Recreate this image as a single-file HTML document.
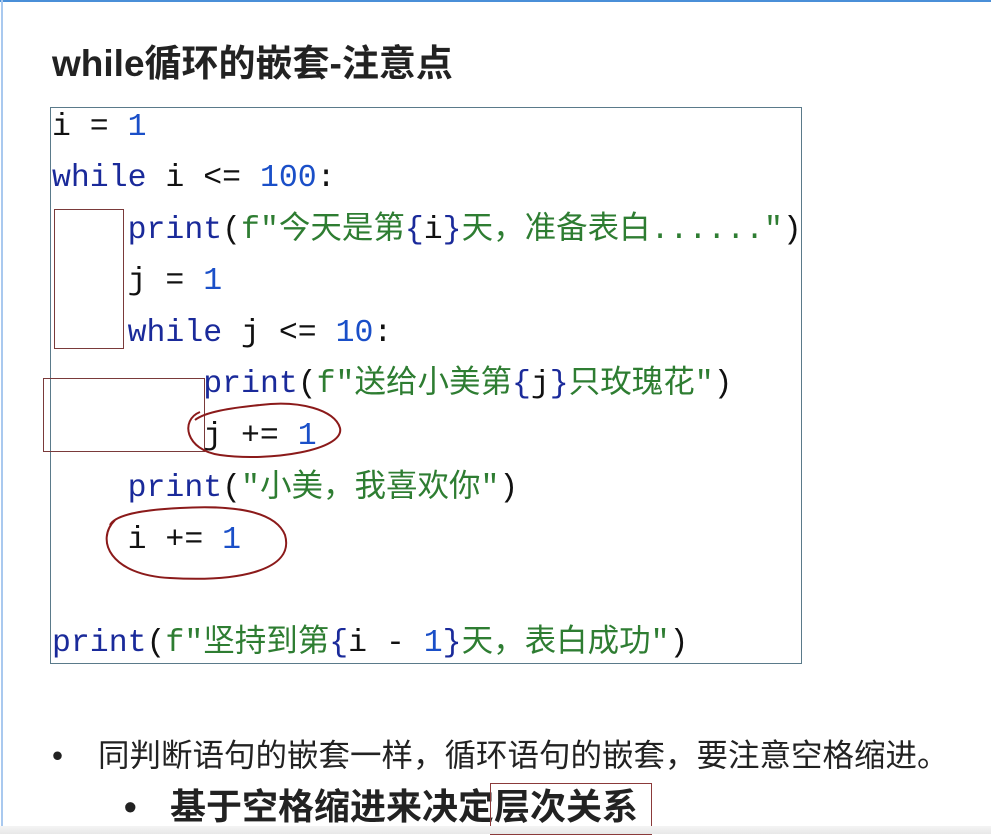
<!DOCTYPE html><html><head><meta charset="utf-8"><style>
body{margin:0;width:991px;height:834px;background:#fff;position:relative;overflow:hidden;font-family:"Liberation Sans","Noto Sans CJK SC",sans-serif}
.top{position:absolute;left:0;top:0;width:991px;height:2px;background:#4a8fd8}
.left{position:absolute;left:1px;top:0;width:2px;height:834px;background:#a9c9ef}
h1{position:absolute;left:52px;top:42px;margin:0;font-size:37px;line-height:44px;font-weight:bold;color:#222}
.box{position:absolute;left:50px;top:107px;width:752px;height:557px;border:1px solid #5a7a8a;box-sizing:border-box}
.l{position:absolute;left:52px;font-family:"Liberation Mono","Noto Sans CJK SC",monospace;font-size:31.5px;white-space:pre;line-height:40px;color:#111}
.k{color:#1a2a9a}.n{color:#1a4fc8}.s{color:#2e7d32}
.r{position:absolute;border:1px solid #7a3a3a}
.b{position:absolute;color:#222;white-space:nowrap}
.bot{position:absolute;left:0;top:826px;width:991px;height:8px;background:linear-gradient(#f4f4f4,#e8e8e8)}
</style></head><body>
<div class="top"></div><div class="left"></div>
<h1>while循环的嵌套-注意点</h1>
<div class="box"></div>
<div class="l" style="top:108px">i = <span class="n">1</span></div>
<div class="l" style="top:159px"><span class="k">while</span> i &lt;= <span class="n">100</span>:</div>
<div class="l" style="top:211px">    <span class="k">print</span>(<span class="s">f"今天是第</span><span class="k">{</span>i<span class="k">}</span><span class="s">天，准备表白......"</span>)</div>
<div class="l" style="top:262px">    j = <span class="n">1</span></div>
<div class="l" style="top:314px">    <span class="k">while</span> j &lt;= <span class="n">10</span>:</div>
<div class="l" style="top:365px">        <span class="k">print</span>(<span class="s">f"送给小美第</span><span class="k">{</span>j<span class="k">}</span><span class="s">只玫瑰花"</span>)</div>
<div class="l" style="top:417px">        j += <span class="n">1</span></div>
<div class="l" style="top:469px">    <span class="k">print</span>(<span class="s">"小美，我喜欢你"</span>)</div>
<div class="l" style="top:521px">    i += <span class="n">1</span></div>
<div class="l" style="top:624px"><span class="k">print</span>(<span class="s">f"坚持到第</span><span class="k">{</span>i - <span class="n">1</span><span class="k">}</span><span class="s">天，表白成功"</span>)</div>
<div class="r" style="left:54px;top:209px;width:68px;height:138px"></div>
<div class="r" style="left:43px;top:378px;width:160px;height:72px"></div>
<svg style="position:absolute;left:0;top:0" width="991" height="834" fill="none" stroke="#8b1a1a" stroke-width="2">
<path d="M200 412 C180 420 185 450 220 455 C270 462 345 450 340 428 C335 410 300 400 260 405 C230 408 205 412 195 420"/>
<path d="M115 520 C95 540 110 575 170 578 C240 582 295 570 285 535 C275 510 230 505 180 508 C140 510 115 515 110 525"/>
</svg>
<div class="b" style="left:52px;top:736px;font-size:31.5px;line-height:38px">•<span style="position:absolute;left:46px">同判断语句的嵌套一样，循环语句的嵌套，要注意空格缩进。</span></div>
<div class="b" style="left:124px;top:785px;font-size:36px;line-height:44px;font-weight:bold">•<span style="position:absolute;left:46px">基于空格缩进来决定层次关系</span></div>
<div class="r" style="left:490px;top:783px;width:160px;height:50px;border-color:#8b3a3a"></div>
<div class="bot"></div>
</body></html>
